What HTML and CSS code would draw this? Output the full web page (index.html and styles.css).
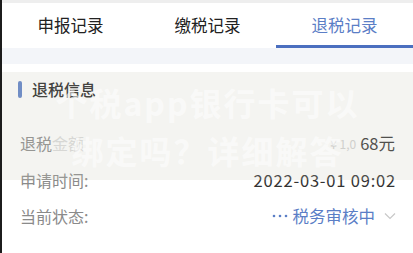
FILE: index.html
```html
<!DOCTYPE html>
<html lang="zh">
<head>
<meta charset="utf-8">
<link rel="stylesheet" href="styles.css">
</head>
<body>
<div class="page">
  <div class="topstrip"></div>
  <nav class="tabs">
    <div class="tab">申报记录</div>
    <div class="tab">缴税记录</div>
    <div class="tab active">退税记录</div>
  </nav>
  <div class="gap"></div>
  <section class="card">
    <h2 class="title"><span class="bar"></span>退税信息</h2>
    <div class="row"><span class="label">退税<span class="faded">金额</span></span><span class="value"><span class="faded-val">¥ 1,0</span>68元</span></div>
    <div class="row"><span class="label">申请时间:</span><span class="value date">2022-03-01 09:02</span></div>
    <div class="row"><span class="label">当前状态:</span><span class="value status"><svg class="dots" width="16" height="4" viewBox="0 0 16 4"><circle cx="2" cy="2" r="1.3" fill="#5b7ec6"/><circle cx="8" cy="2" r="1.3" fill="#5b7ec6"/><circle cx="14" cy="2" r="1.3" fill="#5b7ec6"/></svg>税务审核中<svg class="chev" width="12" height="8" viewBox="0 0 12 8"><path d="M1 1.5 L6 6.5 L11 1.5" fill="none" stroke="#c8c8c8" stroke-width="1.2"/></svg></span></div>
  </section>
  <div class="watermark">
    <div class="wm-line">个税app银行卡可以</div>
    <div class="wm-line">绑定吗？详细解答</div>
  </div>
</div>
</body>
</html>
```
FILE: styles.css
```css
html, body {
  margin: 0;
  padding: 0;
  background: #ffffff;
}
body {
  font-family: "Noto Sans CJK SC", "Noto Sans", sans-serif;
}
.page {
  position: relative;
  width: 411px;
  height: 253px;
  border-left: 2px solid #1c1c1c;
  overflow: hidden;
  background: #ffffff;
}
.topstrip {
  height: 3px;
  background: #eeeeee;
}
.tabs {
  display: grid;
  grid-template-columns: 1fr 1fr 1fr;
  height: 45px;
}
.tab {
  position: relative;
  display: flex;
  align-items: center;
  justify-content: center;
  font-size: 16.5px;
  color: #222222;
  padding-bottom: 2px;
}
.tab.active {
  color: #5b7ec6;
}
.tab.active::after {
  content: "";
  position: absolute;
  left: 0;
  right: 0;
  bottom: 0;
  height: 3px;
  background: #4b6fbf;
}
.gap {
  height: 16px;
  background: #f3f5f9;
}
.card {
  padding: 16px 18px 0 16px;
}
.title {
  display: flex;
  align-items: center;
  gap: 10px;
  margin: 0;
  height: 18px;
  font-size: 16px;
  font-weight: 500;
  color: #222222;
}
.bar {
  width: 4px;
  height: 17px;
  border-radius: 2px;
  background: #5a7fc8;
}
.row {
  display: flex;
  justify-content: space-between;
  align-items: center;
  height: 36.5px;
  padding-left: 2px;
}
.title + .row {
  margin-top: 27px;
}
.label {
  font-size: 16px;
  color: #8a8a8a;
}
.faded {
  opacity: 0.3;
}
.value {
  font-size: 16.5px;
  color: #333333;
  display: flex;
  align-items: center;
}
.date {
  letter-spacing: 0.8px;
  margin-right: -1px;
}
.faded-val {
  color: #d2d2d2;
  font-size: 12px;
  margin-right: 4px;
}
.status {
  color: #5b7ec6;
}
.dots {
  margin-right: 5px;
}
.chev {
  margin-left: 9px;
  margin-right: -1px;
}
.watermark {
  position: absolute;
  left: 0;
  right: 0;
  top: 72px;
  height: 108px;
  background: rgba(200, 200, 185, 0.2);
  display: flex;
  flex-direction: column;
  align-items: center;
  justify-content: center;
  gap: 8px;
  pointer-events: none;
}
.wm-line {
  font-size: 32px;
  font-weight: 700;
  line-height: 40px;
  letter-spacing: 2px;
  color: rgba(255, 255, 255, 0.55);
}
```
